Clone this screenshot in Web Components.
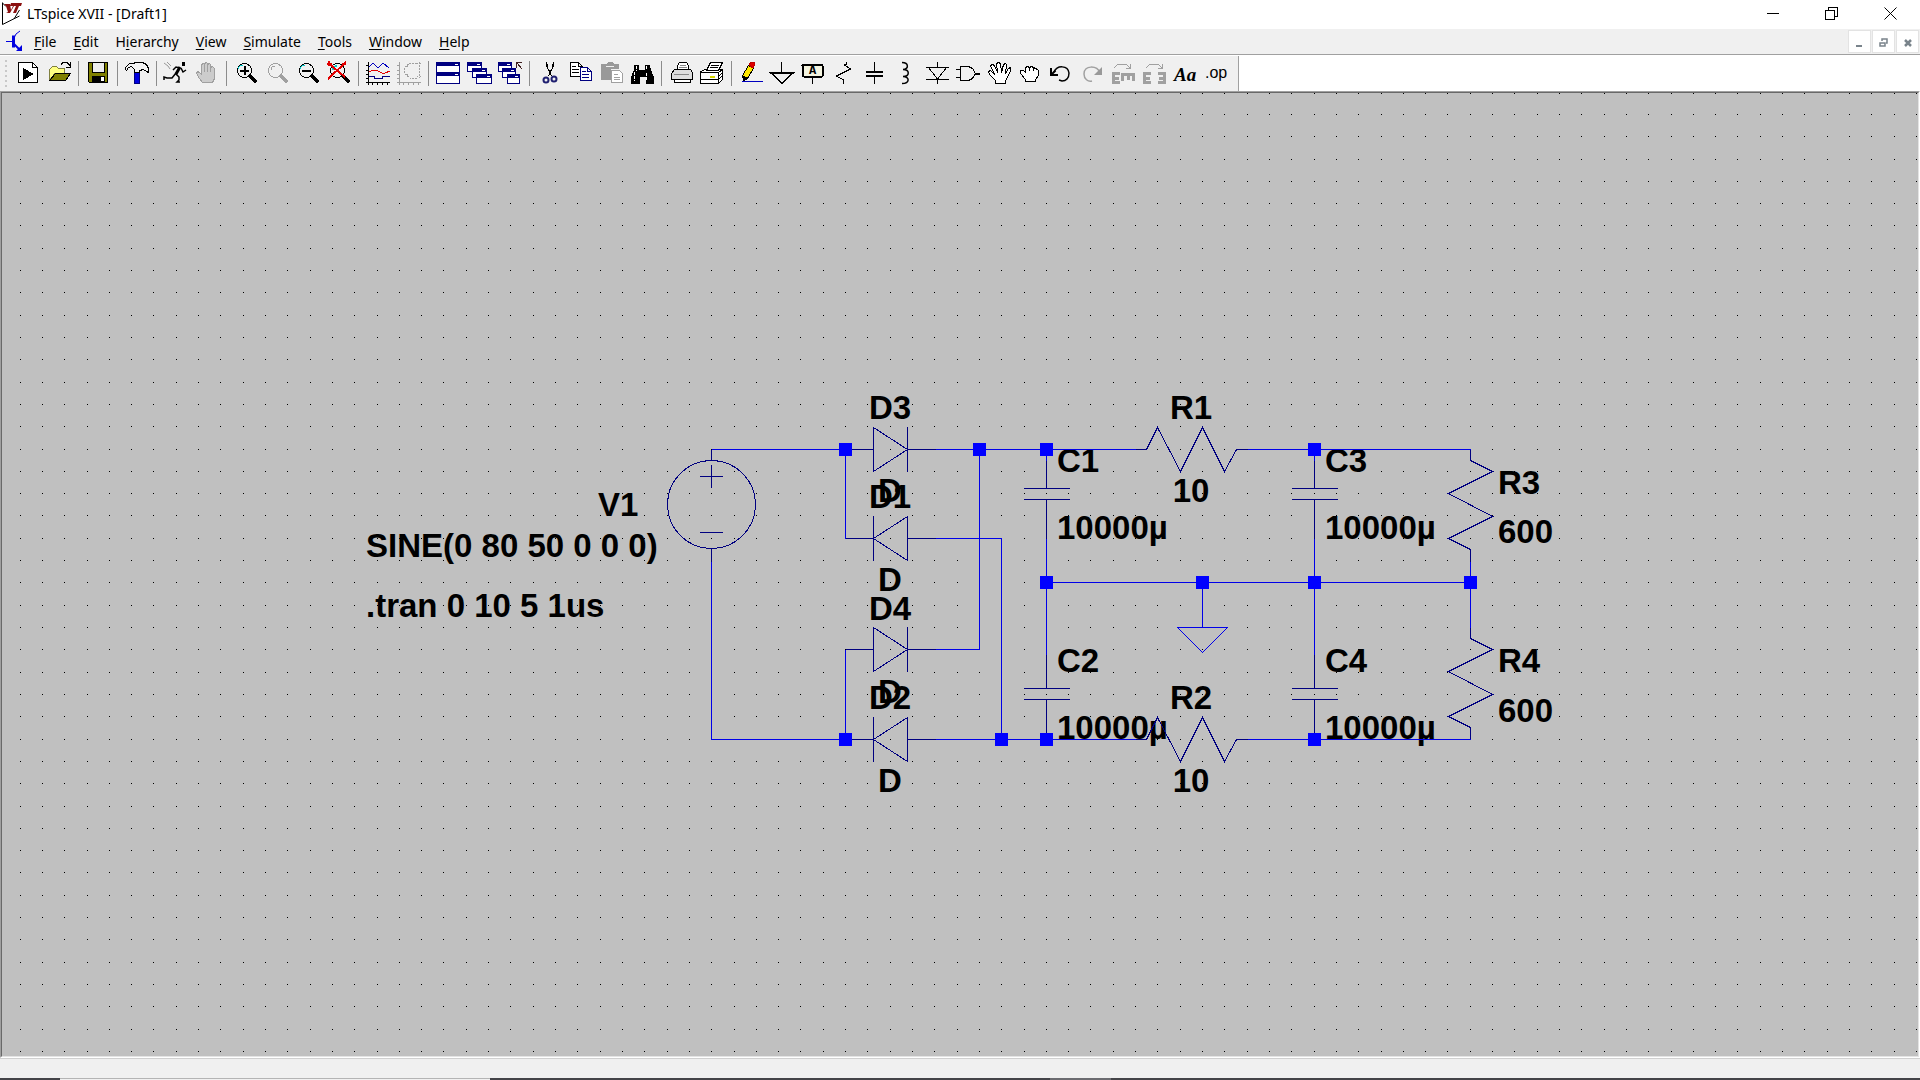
<!DOCTYPE html>
<html lang="en">
<head>
<meta charset="utf-8">
<title>LTspice XVII - [Draft1]</title>
<style>
  html, body {
    height: 100%;
    margin: 0;
  }
  body {
    font-family: "Noto Sans", "Open Sans", sans-serif;
    font-size: 14px;
    color: #000;
    background: #fff;
    overflow: hidden;
  }
</style>
</head>
<body>
<app-window>
  <title-bar slot="title">LTspice XVII - [Draft1]</title-bar>
  <menu-bar slot="menu"></menu-bar>
  <tool-bar slot="tools"></tool-bar>
  <schematic-view></schematic-view>
  <status-bar slot="status"></status-bar>
</app-window>

<script>
class AppWindow extends HTMLElement {
  constructor() {
    super();
    this.attachShadow({ mode: "open" }).innerHTML = `
      <style>
        :host {
          display: flex;
          flex-direction: column;
          height: 100vh;
        }
        main {
          flex: 1;
          min-height: 0;
          display: flex;
        }
      </style>
      <header>
        <slot name="title"></slot>
        <slot name="menu"></slot>
        <slot name="tools"></slot>
      </header>
      <main><slot></slot></main>
      <slot name="status"></slot>
    `;
  }
}

class TitleBar extends HTMLElement {
  constructor() {
    super();
    this.attachShadow({ mode: "open" }).innerHTML = `
      <style>
        :host {
          display: flex;
          align-items: center;
          height: 27px;
          padding-bottom: 2px;
          background: #fff;
        }
        .logo {
          width: 21px;
          height: 23px;
          margin: 0 4px 0 2px;
        }
        .name {
          flex: 1;
        }
        button {
          width: 59px;
          height: 27px;
          padding: 0;
          border: 0;
          background: none;
        }
        button svg {
          display: block;
          margin: 0 auto;
          fill: none;
          stroke: #000;
          shape-rendering: crispEdges;
        }
      </style>
      <svg class="logo" viewBox="0 0 21 23">
        <path d="M.5 .5V22.5L17.5 14M.5 1L4 4.500M17.5 8L12 17" fill="none" stroke="#000"/>
        <path d="M2 2h6l1 6 2-4H8l1-3h11l-1 3h-2l-3 7h-3l3-7h-2L8 11H4l2-1-2-6z" fill="#8b1010"/>
      </svg>
      <span class="name"><slot></slot></span>
      <button aria-label="Minimize"><svg width="13" height="13"><path d="M.5 6.500h12"/></svg></button>
      <button aria-label="Restore"><svg width="13" height="13"><path d="M.5 3.500h9v9h-9zM3.500 3V.5h9v9H10"/></svg></button>
      <button aria-label="Close"><svg width="13" height="13"><path d="M.5 .5l12 12M12.500 .5l-12 12" shape-rendering="auto"/></svg></button>
    `;
  }
}

// "&" stands before the access key of each menu
const MENUS = ["&File", "&Edit", "H&ierarchy", "&View", "&Simulate", "&Tools", "&Window", "&Help"];

class MenuBar extends HTMLElement {
  constructor() {
    super();
    this.attachShadow({ mode: "open" }).innerHTML = `
      <style>
        :host {
          display: flex;
          align-items: stretch;
          height: 25px;
          background: #f0f0f0;
          border-bottom: 1px solid #a0a0a0;
        }
        .doc {
          width: 20px;
          height: 22px;
          margin: 1px 0 0 6px;
        }
        nav {
          flex: 1;
          display: flex;
          gap: 1px;
        }
        nav button {
          font: inherit;
          color: inherit;
          padding: 0 8px;
          border: 0;
          background: none;
        }
        u {
          text-underline-offset: 2px;
        }
        .mdi {
          display: flex;
          gap: 1px;
          padding: 1px 1px 0 0;
        }
        .mdi button {
          width: 23px;
          height: 23px;
          padding: 0;
          background: #fff;
          border: 1px solid #e3e3e3;
        }
        .mdi svg {
          display: block;
          margin: 1px auto 0;
          fill: none;
          stroke: #79838b;
          stroke-width: 2;
        }
      </style>
      <svg class="doc" viewBox="0 0 20 22" fill="none" stroke="#0000e0">
        <path d="M0 11.500h7" stroke-width="1"/>
        <path d="M7.500 5.500v12" stroke-width="3"/>
        <path d="M8 8L10 4 14 1" stroke-width="1"/>
        <path d="M8 14l6 6" stroke-width="2"/>
        <path d="M10 21h6v-6z" fill="#0000e0" stroke="none"/>
      </svg>
      <nav>${MENUS.map(m => `<button>${m.replace(/&(.)/, "<u>$1</u>")}</button>`).join("")}</nav>
      <div class="mdi">
        <button aria-label="Minimize document"><svg width="9" height="9"><path d="M1 8h6"/></svg></button>
        <button aria-label="Restore document"><svg width="9" height="9"><path d="M1 5h5v3H1zM3 3V1h5v4H7" stroke-width="1.500"/></svg></button>
        <button aria-label="Close document"><svg width="9" height="9"><path d="M2 2l6 6M8 2L2 8" stroke-width="2.500"/></svg></button>
      </div>
    `;
  }
}

const HAND = "M7.500 21.500L4.500 17.500 1.500 12.500 2.500 10.500 4.500 11.500 6.500 13.500V3.500L8.500 2.500 9.500 3.500V11 2.500L11.500 1.500 12.500 2.500V11 3.500L14.500 2.500 15.500 3.500V11 6.500L17.500 5.500 19.500 7.500V17.500L17.500 21.500z";
const lens = `<circle cx="10.500" cy="9.500" r="7"/><path d="M15.500 14.500l7 7" stroke-width="3"/>`;
const win = (x, y, w, h) =>
  `<path d="M${x}.5 ${y}.5h${w}v${h}h-${w}z" fill="#fff" stroke="#000080"/><path d="M${x} ${y}h${w + 1}v4h-${w + 1}z" fill="#000080" stroke="none"/><path d="M${x + w - 4} ${y + 2}h3" stroke="#fff"/>`;

// drawn on a 25 x 25 pixel raster
const ICONS = {
  run: `<path d="M2.500 1.500h14l5 5v15h-19z" fill="#fff"/><path d="M16.500 1.500v5h5"/><path d="M7 7l11 6-11 6z" fill="#000" stroke="none"/>`,
  open: `<path d="M2.500 19V8.500l3-3h4l2 2h6v5H8z" fill="#ffff80" stroke="#808040"/><path d="M2.500 19.500l6-7h15l-5 7z" fill="#808000"/><path d="M14 3.500l2-2h4l3 3M23.500 1v5h-5"/>`,
  save: `<path d="M2.500 1.500h19v20h-18l-1-1z" fill="#808000"/><path d="M6.500 1.500h12v10h-12z" fill="#eee"/><path d="M6 15h13v7H6z" fill="#000" stroke="none"/><path d="M15 16h3v4h-3z" fill="#fff" stroke="none"/>`,
  hammer: `<path d="M9.500 11h5v11h-5z" fill="#0000e0" stroke="#000080"/><path d="M.5 8.500v-2l4-4h4l2-1h7l4 2 2 4v4l-2-1-3-2-4 1v2h-5v-3l-3-3-3 1-2 3z" fill="#f4f4f4"/>`,
  simulate: `<g shape-rendering="auto"><path d="M0 2l4 3 2 3M3 1l4 4" stroke="#999"/><path d="M18 1h3v4h-3z" fill="#000" stroke="none"/><path d="M16 6l-4 7" stroke-width="3"/><path d="M16 7L12 6 9 9M17 7l2 4 3-2M12 13l3 3v3l-2 2h3M12 12l-4 5H3l-3-1v3" stroke-width="1.500"/></g>`,
  halt: `<path d="${HAND}" fill="#ccc"/>`,
  zoomIn: `${lens}<path d="M4 8q1-4 5-4" stroke="#00d0d0"/><path d="M6 9.500h9M10.500 5v9" stroke-width="2"/>`,
  pan: `${lens}<path d="M6 9q0-4 4-4"/>`,
  zoomOut: `${lens}<path d="M4 8q1-4 5-4" stroke="#00d0d0"/><path d="M6 9.500h9" stroke-width="2"/>`,
  zoomFull: `${lens}<path d="M6 9q0-4 4-4" stroke="#00d0d0" stroke-width="2"/><path d="M1 2l17 14M19 1L1 18M0 3h5M2 0v5M15 3h4" stroke="#e00000" stroke-width="2"/>`,
  plot: `<path d="M2.500 1v23M0 21.500h24M0 4.500h2M0 9.500h2M0 13.500h2M0 17.500h2M6.500 21v3M11.500 21v3M16.500 21v3M21.500 21v3"/><path d="M3 6l4-4 5 5 5-5 6 5" stroke="#0000c0"/><path d="M3 11l4-2 5 1 4 2h3l5-2" stroke="#e00000"/><path d="M3 15.500h5v2h8v-2h8" stroke="#000080"/>`,
  smith: `<path d="M2.500 1v23M0 21.500h24M0 4.500h2M0 9.500h2M0 13.500h2M0 17.500h2M6.500 21v3M11.500 21v3M16.500 21v3M21.500 21v3" /><path d="M22.500 1v16M20 3l2-2 2 2M20 15l2 2 2-2M20 2h-7L7 7v5l6 5h7M9 5h3M9 13h3" stroke-dasharray="2 1"/>`,
  tile: win(0, 1, 23, 10) + win(0, 11, 23, 11),
  cascade: win(0, 1, 14, 9) + win(5, 7, 14, 9) + win(9, 13, 15, 9),
  closeAll: win(0, 1, 13, 9) + win(4, 7, 13, 9) + win(9, 13, 12, 9) + `<path d="M18.500 7V1.500h5M19 2l5 6" stroke="#402020"/>`,
  cut: `<path d="M9.500 1v4l5 10M16.500 1v4l-5 10M10.500 3v4M15.500 3v4" stroke-width="1"/><path d="M13 9v5" stroke-width="2"/><g stroke="#202070" stroke-width="2" shape-rendering="auto"><circle cx="9" cy="19" r="2.500"/><circle cx="17" cy="18" r="2.500"/></g>`,
  copy: `<path d="M2.500 1.500h8l4 4v10h-12zM10.500 1.500v4h4M4 5.500h4M4 8.500h7M4 11.500h7" fill="#fff"/><path d="M12.500 6.500h7l4 4v9h-11zM19.500 6.500v4h4M14 10.500h4M14 13.500h7M14 16.500h7" fill="#fff" stroke="#000080"/>`,
  paste: `<path d="M2 3h5l2-2h4l2 2h5v5h-8v11H2z" fill="#999" stroke="none"/><path d="M12.500 9.500h8l3 3v9h-11z" fill="#fff"/><path d="M15 13.500h4M15 16.500h6M15 18.500h6"/><path d="M7 5.500h8" stroke="#eee"/>`,
  find: `<path d="M4 4h5v5h6V4h5l1 5 3 7v7h-8v-7h-6v7H1v-7l3-7z" fill="#000" stroke="none"/><path d="M6.500 5v5M4.500 11v9M16.500 5v4M16.500 12v8" stroke="#fff" stroke-dasharray="3 1"/>`,
  print: `<path d="M8.500 9V4.500l2-3h7l2 3V9" fill="#fff"/><path d="M2.500 12.500l3-4h16l2 3v7h-21z" fill="#ddd"/><path d="M5.500 18.500h16v3h-16z" fill="#fff"/><path d="M5 13.500h15M11 4.500h6M10 6.500h8" stroke="#888"/>`,
  setup: `<path d="M.5 10.500l5-2h17v10l-4 4H.5z" fill="#fff"/><path d="M6.500 9.500l4-8h12l-4 8z" fill="#fff"/><path d="M11 4.500h8M10 6.500h8M.5 11.500h18v10M18.500 11.500l4-3M0 18.500h18M18.500 15l4-3M18.500 18l4-3"/><path d="M10 15.500h5" stroke="#d8d800" stroke-width="2"/>`,
  wire: `<path d="M4.500 19.500l-1-5 6-10 5 3-6 10z" fill="#ffe800"/><path d="M3.500 14.500l1 5 4-2z" fill="#000"/><path d="M10 4l2-3h3l1 2-2 4z" fill="#e00000" stroke="#c00000"/><path d="M3 20.500h21" stroke="#0000c0"/>`,
  ground: `<path d="M11.500 1v11"/><path d="M1 12h22L12 22z" stroke-width="1.500"/>`,
  net: `<rect x="1.500" y="3.500" width="20" height="12" rx="1" fill="#f4f4e0" stroke-width="2"/><path d="M11.500 16v7"/><text x="8" y="13" font-family="Liberation Mono" font-size="12" font-weight="700" fill="#000" stroke="none">A</text>`,
  resistor: `<path d="M14.500 1v2l-2 1 6 4-14 7 7 4v4"/>`,
  capacitor: `<path d="M11.500 1v10M11.500 15v8"/><path d="M3 11h17M3 15h17" stroke-width="2"/>`,
  inductor: `<g shape-rendering="auto"><path d="M8 1.500c7 0 7 7 1 7 7 0 7 7 0 7 7 0 7 7-1 7" stroke-width="1.500"/></g>`,
  diode: `<path d="M12.500 1v5M1 6.500h23M3 6l9.500 12L22 6M1 18.500h23M12.500 18v5"/>`,
  component: `<path d="M4.500 5.500h8l4 2 3 5-3 5-4 2h-8zM0 8.500h4M0 16.500h4"/><path d="M19 12.500h5" stroke-width="2"/>`,
  move: `<path d="M8.500 22.500v-3l-6-6-1-3 2-1 4 4-4-9 2-1 2 1 3 7-1-9 2-1 2 1 1 9 2-8 2-1 1 1-1 9 3-5 2-1v3l-3 7-2 3v3z" fill="#fff"/>`,
  drag: `<path d="M7.500 20.500v-2l-5-6v-3h3l2 2v-5l2-1 2 1 2-1 2 1 2 1 2 1 1 1v5l-3 4v2zM11.500 6v4M15.500 7v3" fill="#fff"/>`,
  undo: `<g shape-rendering="auto"><path d="M5 11C8 4 19 4 20 12c0 5-3 8-7 8l-3-1" stroke-width="1.500"/><path d="M2 7v7h7" stroke-width="2"/><path d="M2.500 13.500l4-4" stroke-width="2"/></g>`,
  redo: `<g shape-rendering="auto"><path d="M20 12C17 4 4 4 4 13c0 5 4 8 8 7" stroke-width="1.500"/><path d="M22 6v8h-8z" fill="#999" stroke="none"/></g>`,
  rotate: `<path d="M3 7l4-4h8l4 4M19.500 3v4h-5"/><path d="M2.500 11v12M2 12.500h7M2 17h6M2 21.500h7M10 13.500h14M11.500 13v7M17 13v6M22.500 13v7" stroke-width="3"/>`,
  mirror: `<path d="M4 7l4-4h8l4 4M20.500 3v4h-5"/><path d="M2.500 11v12M2 12.500h7M2 17h6M2 21.500h7M22.500 11v12M16 12.500h7M17 17h6M16 21.500h7" stroke-width="3"/>`,
  text: `<text x="1" y="20" font-family="Liberation Serif" font-size="19" font-weight="700" font-style="italic" fill="#000" stroke="none">Aa</text>`,
  directive: `<text x="1" y="17" font-family="Liberation Sans" font-size="16" fill="#000" stroke="none">.op</text>`
};

const GROUPS = [
  [["run", "Run"], ["open", "Open"]],
  [["save", "Save"]],
  [["hammer", "Control Panel"]],
  [["simulate", "Simulate"], ["halt", "Halt", true]],
  [["zoomIn", "Zoom in"], ["pan", "Pan", true], ["zoomOut", "Zoom back"], ["zoomFull", "Zoom full extents"]],
  [["plot", "Autorange"], ["smith", "Pick visible traces", true]],
  [["tile", "Tile windows"], ["cascade", "Cascade windows"], ["closeAll", "Close all windows"]],
  [["cut", "Cut"], ["copy", "Copy"], ["paste", "Paste", true], ["find", "Find"]],
  [["print", "Print"], ["setup", "Print setup"]],
  [["wire", "Wire"], ["ground", "Ground"], ["net", "Label net"], ["resistor", "Resistor"], ["capacitor", "Capacitor"],
   ["inductor", "Inductor"], ["diode", "Diode"], ["component", "Component"], ["move", "Move"], ["drag", "Drag"],
   ["undo", "Undo"], ["redo", "Redo", true], ["rotate", "Rotate", true], ["mirror", "Mirror", true],
   ["text", "Text"], ["directive", "SPICE directive"]]
];

class ToolBar extends HTMLElement {
  constructor() {
    super();
    this.attachShadow({ mode: "open" }).innerHTML = `
      <style>
        :host {
          display: flex;
          height: 36px;
          background: #fff;
        }
        .band {
          display: flex;
          align-items: center;
          margin-top: 1px;
          padding: 0 6px 0 5px;
          background: #f0f0f0;
          border-right: 1px solid #a0a0a0;
        }
        .grip {
          width: 2px;
          height: 28px;
          margin-right: 6px;
          background: repeating-linear-gradient(#c8c8c8 0 2px, #f0f0f0 2px 5px);
        }
        .group {
          display: flex;
        }
        .group + .group::before {
          content: "";
          width: 1px;
          height: 25px;
          margin: 0 4px 0 3px;
          background: #8c8c8c;
        }
        button {
          width: 31px;
          height: 25px;
          padding: 0;
          border: 0;
          background: none;
          color: #000;
        }
        button:disabled {
          color: #a0a0a0;
        }
        svg {
          display: block;
          margin: 0 3px;
          overflow: visible;
          fill: none;
          stroke: currentColor;
          shape-rendering: crispEdges;
        }
      </style>
      <div class="band">
        <span class="grip"></span>
        ${GROUPS.map(group => `<div class="group">${group.map(([icon, label, off]) => `
          <button aria-label="${label}" ${off ? "disabled" : ""}>
            <svg width="25" height="25">${ICONS[icon]}</svg>
          </button>`).join("")}</div>`).join("")}
      </div>
    `;
  }
}

// Symbols are drawn round their own anchor, wires and labels in sheet pixels.
const diodeRight = (x, y) => `M${x} ${y}h28M${x + 62} ${y}h28M${x + 28} ${y - 22}v44l34 -22zM${x + 62} ${y - 23}v45`;
const diodeLeft = (x, y) => `M${x} ${y}h28M${x + 62} ${y}h28M${x + 62} ${y - 22}v44l-34 -22zM${x + 28} ${y - 23}v45`;
const capacitor = (x, y) => `M${x} ${y - 45}v34M${x - 23} ${y - 11}h46M${x - 23} ${y}h46M${x} ${y}v39`;
const resistorH = (x, y) => `M${x} ${y}h11l11 -22 23 44 22 -44 22 44 12 -22h11`;
const resistorV = (x, y) => `M${x} ${y}v11l22 11 -44 22 44 23 -44 22 22 11v12`;
const source = (x, y) => `M${x} ${y}v11M${x} ${y + 99}v13M${x - 12} ${y + 27}h23M${x} ${y + 15}v23M${x - 12} ${y + 83}h23M${x - 44} ${y + 55}a44 44 0 1 0 88 0a44 44 0 1 0 -88 0`;

const SYMBOLS = [
  source(711, 449),
  diodeRight(845, 449), diodeLeft(845, 538), diodeRight(845, 649), diodeLeft(845, 739),
  capacitor(1046, 499), capacitor(1046, 699), capacitor(1314, 499), capacitor(1314, 699),
  resistorH(1135, 449), resistorH(1135, 739),
  resistorV(1470, 449), resistorV(1470, 627)
];

const WIRES = [
  "M711 449H845", "M935 449H1135", "M1247 449H1470",
  "M711 561V739H845", "M935 739H1135", "M1247 739H1470",
  "M845 449V538", "M845 739V649", "M935 538H1001V739", "M935 649H979V449",
  "M1046 449V460", "M1046 538V654", "M1314 449V460", "M1314 538V654",
  "M1046 582H1470", "M1470 561V627", "M1202 582V627M1177 627h50l-25 25z"
];

const NODES = [
  [845, 449], [979, 449], [1046, 449], [1314, 449],
  [1046, 582], [1202, 582], [1314, 582], [1470, 582],
  [845, 739], [1001, 739], [1046, 739], [1314, 739]
];

const LABELS = [
  [598, 516, "V1"], [366, 557, "SINE(0 80 50 0 0 0)"], [366, 617, ".tran 0 10 5 1us"],
  [890, 419, "D3", 1], [890, 502, "D", 1], [890, 508, "D1", 1], [890, 591, "D", 1],
  [890, 620, "D4", 1], [890, 703, "D", 1], [890, 709, "D2", 1], [890, 792, "D", 1],
  [1057, 472, "C1"], [1057, 539, "10000µ"], [1057, 672, "C2"], [1057, 739, "10000µ"],
  [1191, 419, "R1", 1], [1191, 502, "10", 1], [1191, 709, "R2", 1], [1191, 792, "10", 1],
  [1325, 472, "C3"], [1325, 539, "10000µ"], [1325, 672, "C4"], [1325, 739, "10000µ"],
  [1498, 494, "R3"], [1498, 543, "600"], [1498, 672, "R4"], [1498, 722, "600"]
];

const PITCH = 22.31;

class SchematicView extends HTMLElement {
  constructor() {
    super();
    this.attachShadow({ mode: "open" }).innerHTML = `
      <style>
        :host {
          display: block;
          flex: 1;
          min-width: 0;
          box-sizing: border-box;
          background: #c0c0c0;
          border: 1px solid #a0a0a0;
          border-right-color: #fff;
          border-bottom-color: #fff;
        }
        .inner {
          height: 100%;
          box-sizing: border-box;
          border: 1px solid #696969;
          border-right-color: #e3e3e3;
          border-bottom-color: #e3e3e3;
        }
        svg {
          display: block;
          width: 100%;
          height: 100%;
          fill: none;
          shape-rendering: crispEdges;
        }
        .grid { stroke: #000; }
        .symbols { stroke: #000080; }
        .wires { stroke: #0000e8; }
        .nodes { fill: #0000ff; }
        text {
          font: bold 33px "Liberation Sans", Arial, sans-serif;
          fill: #000;
        }
      </style>
      <div class="inner">
        <svg role="img" aria-label="Schematic">
          <path class="grid"/>
          <g transform="translate(-2 -93)">
            <g>${LABELS.map(([x, y, s, mid]) => `<text x="${x}" y="${y}" ${mid ? 'text-anchor="middle"' : ""}>${s}</text>`).join("")}</g>
            <g transform="translate(.5 .5)">
              <path class="symbols" d="${SYMBOLS.join("")}"/>
              <path class="wires" d="${WIRES.join("")}"/>
            </g>
            <g class="nodes">${NODES.map(([x, y]) => `<rect x="${x - 6}" y="${y - 6}" width="13" height="13"/>`).join("")}</g>
          </g>
        </svg>
      </div>
    `;
  }

  connectedCallback() {
    this.drawGrid();
    window.addEventListener("resize", () => this.drawGrid());
  }

  // whole-pixel dots, so that they fall under the wires
  drawGrid() {
    const svg = this.shadowRoot.querySelector("svg");
    const { width, height } = svg.getBoundingClientRect();
    let d = "";
    for (let j = 0; j * PITCH < height; j++) {
      const y = Math.max(Math.floor(j * PITCH - 0.9), 0);
      for (let i = 0; i * PITCH + 18 < width; i++) {
        d += `M${Math.floor(i * PITCH + 18.1)} ${y}.5h1`;
      }
    }
    this.shadowRoot.querySelector(".grid").setAttribute("d", d);
  }
}

class StatusBar extends HTMLElement {
  constructor() {
    super();
    this.attachShadow({ mode: "open" }).innerHTML = `
      <style>
        :host {
          display: block;
        }
        .panel {
          height: 19px;
          background: #f0f0f0;
          border-top: 1px solid #d0d0d0;
        }
        .edge {
          display: flex;
          height: 2px;
          background: #444448;
        }
        .field {
          width: 430px;
          margin-left: 60px;
          box-sizing: border-box;
          background: #f0f0f0;
          border-top: 1px solid #b4b4b4;
        }
        .active {
          width: 61px;
          margin-left: 560px;
          background: #6c6c70;
        }
      </style>
      <div class="panel"></div>
      <div class="edge"><span class="field"></span><span class="active"></span></div>
    `;
  }
}

customElements.define("app-window", AppWindow);
customElements.define("title-bar", TitleBar);
customElements.define("menu-bar", MenuBar);
customElements.define("tool-bar", ToolBar);
customElements.define("schematic-view", SchematicView);
customElements.define("status-bar", StatusBar);
</script>
</body>
</html>
